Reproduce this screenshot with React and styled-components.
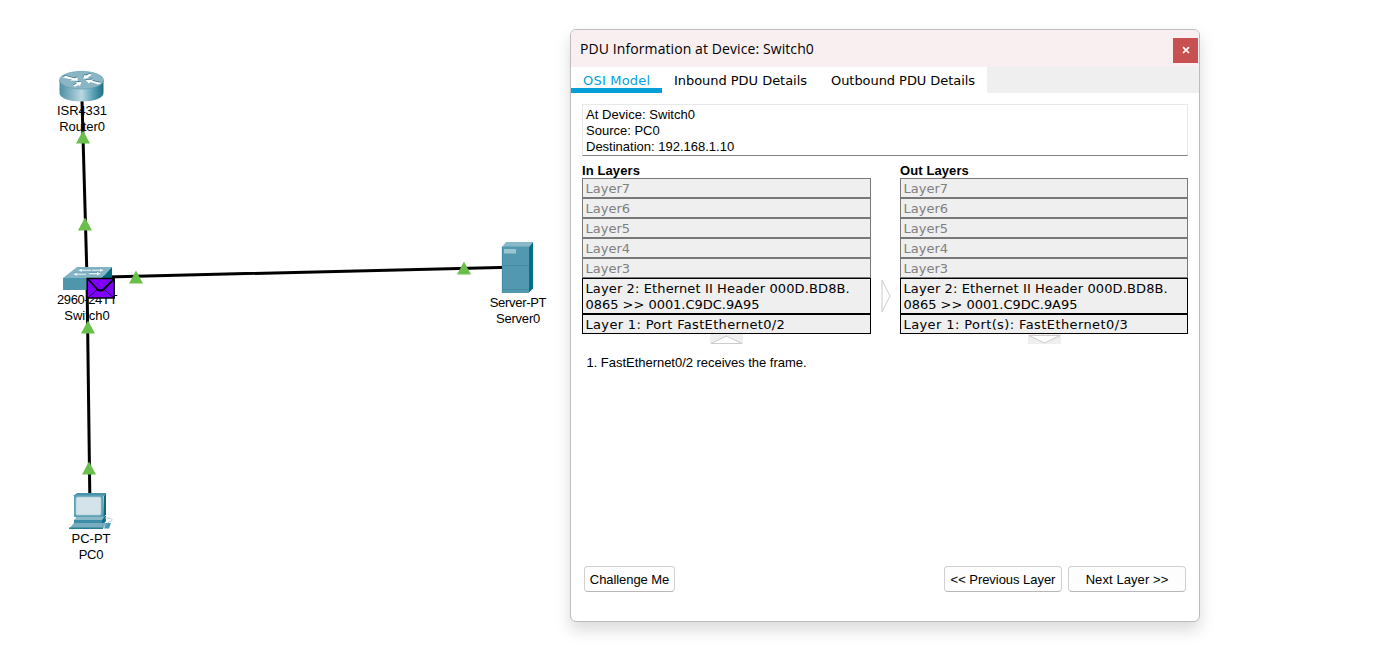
import React from "react";
import styled, { createGlobalStyle } from "styled-components";

const Global = createGlobalStyle`
  *, *::before, *::after { box-sizing: border-box; }
  body { margin: 0; background: #fff; color: #000; overflow: hidden;
    font-family: "Liberation Sans", Arial, sans-serif; font-size: 13px; line-height: 16px; }
`;

const Workspace = styled.main`
  position: relative;
  width: 1379px;
  height: 646px;
  background: #fff;
  overflow: hidden;
`;

const Links = styled.svg`
  position: absolute;
  inset: 0;
`;

const Device = styled.div`
  position: absolute;
  left: ${(p) => p.$x}px;
  top: ${(p) => p.$y}px;
  width: 80px;
  display: flex;
  flex-direction: column;
  align-items: center;
  text-align: center;
  white-space: nowrap;
  svg { overflow: visible; flex: none; }
`;

const Label = styled.span`
  letter-spacing: ${(p) => p.$ls || 0}px;
`;

const Dialog = styled.section`
  position: absolute;
  left: 570px;
  top: 29px;
  width: 630px;
  height: 593px;
  display: flex;
  flex-direction: column;
  background: #fff;
  border: 1px solid #bcbcbc;
  border-radius: 6px;
  box-shadow: 0 8px 16px rgba(0, 0, 0, 0.15);
  overflow: hidden;
  white-space: nowrap;
`;

const TitleBar = styled.header`
  display: flex;
  justify-content: space-between;
  align-items: flex-start;
  height: 37px;
  flex: none;
  padding: 8px 1px 0 9px;
  background: #f9eff0;
`;

const Title = styled.h1`
  margin: 0;
  font: 400 14px/21px "Open Sans", "Noto Sans", sans-serif;
  letter-spacing: 0.09px;
`;

const CloseButton = styled.button`
  display: flex;
  align-items: center;
  justify-content: center;
  width: 25px;
  height: 25px;
  padding: 0 0 1px 1px;
  border: 0;
  background: #c75050;
`;

const TabBar = styled.nav`
  display: flex;
  flex: none;
  height: 26px;
  background: #efefef;
`;

const Tab = styled.button`
  width: ${(p) => p.$w}px;
  height: 26px;
  padding: 6px 0 0 12px;
  border: 0;
  border-bottom: 5px solid ${(p) => (p.$active ? "#049fd9" : "#fff")};
  background: #fff;
  color: ${(p) => (p.$active ? "#049fd9" : "#000")};
  font: 13px/15px "DejaVu Sans", Verdana, sans-serif;
  letter-spacing: ${(p) => p.$ls || 0}px;
  text-align: left;
  white-space: nowrap;
`;

const Body = styled.div`
  display: flex;
  flex-direction: column;
  flex: 1;
  padding: 11px 11px 29px;
`;

const Info = styled.div`
  height: 52px;
  flex: none;
  padding: 2px 3px 0;
  border: 1px solid #e8e8e8;
  border-bottom-color: #828282;
  line-height: 16px;
`;

const Columns = styled.div`
  display: grid;
  grid-template-columns: 289px 29px 288px;
  margin-top: 6px;
`;

const Column = styled.div`
  display: flex;
  flex-direction: column;
  align-items: center;
`;

const Heading = styled.h2`
  align-self: stretch;
  margin: 0;
  height: 16px;
  padding-top: 1px;
  font-size: 13px;
  line-height: 16px;
  font-weight: 700;
  letter-spacing: 0.1px;
`;

const Layer = styled.div`
  align-self: stretch;
  padding: 2px 2.5px 0;
  border: 1px solid ${(p) => (p.$on ? "#000" : "#787878")};
  background: #efefef;
  color: ${(p) => (p.$on ? "#000" : "#808080")};
  font: 13px/16px "DejaVu Sans", Verdana, sans-serif;
`;

const Line = styled.div`
  letter-spacing: ${(p) => p.$ls || 0}px;
`;

const Between = styled.div`
  display: flex;
  justify-content: center;
  padding-top: 117px;
`;

const Message = styled.p`
  margin: 11px 0 0 4.5px;
  letter-spacing: -0.03px;
`;

const Actions = styled.footer`
  display: flex;
  gap: 6px;
  margin: auto 2px 0;
`;

const Action = styled.button`
  width: ${(p) => p.$w}px;
  height: 26px;
  margin-right: ${(p) => (p.$push ? "auto" : 0)};
  padding: 2px 0 0;
  border: 1px solid #d0d0d0;
  border-bottom-color: #b8b8b8;
  border-radius: 4px;
  background: #fdfdfd;
  color: #000;
  font: 13px/16px "Liberation Sans", Arial, sans-serif;
  letter-spacing: ${(p) => p.$ls || 0}px;
  white-space: nowrap;
`;

const routerArrows = [
  "M3.500 6.500L6.500 4.800L15 7.300L18.500 6.300L19 9.800L11 9.500L13 8.500Z",
  "M33 3.800L30.500 2.800L27.300 4.500L25.500 3.800L24 7.800L30 7.300L29 6.300Z",
  "M42.500 12L39.500 13.500L31.500 11L30 12.500L26.500 9L34.500 8.500L33 9.800Z",
  "M14 14.800L16 15.800L19.500 14L21 15L22.500 10.800L16.500 11.300L17.800 12.300Z",
];

const RouterIcon = () => (
  <svg width="46" height="32" viewBox="0 0 46 32">
    <defs>
      <linearGradient id="rside">
        <stop offset="0" stopColor="#4a8fa3" />
        <stop offset="0.3" stopColor="#8dbac8" />
        <stop offset="0.5" stopColor="#b9d8e1" />
        <stop offset="0.8" stopColor="#4f9ab0" />
        <stop offset="1" stopColor="#1b6f88" />
      </linearGradient>
    </defs>
    <path d="M.5 9v13c0 5 10 8.500 22 8.500s22-3.500 22-8.500V9z" fill="url(#rside)" />
    <ellipse cx="22.500" cy="9.200" rx="22" ry="8.900" fill="#8ab5c5" stroke="#5c9bad" strokeWidth=".6" />
    <g fill="#3a7a90" transform="translate(-.3 -.9)">
      {routerArrows.map((d) => <path key={d} d={d} />)}
    </g>
    <g fill="#fff">
      {routerArrows.map((d) => <path key={d} d={d} />)}
    </g>
  </svg>
);

const SwitchIcon = () => (
  <svg width="48" height="26" viewBox="0 0 48 26">
    <path d="M0 12L14 1h35L39 12z" fill="#83b4c5" />
    <path d="M0 12h39v12H0z" fill="#4f96ad" />
    <path d="M39 12L49 1v12L39 24z" fill="#066b82" />
    <g fill="#5a98ac" transform="translate(0 -.8)">
      <path d="M15 4l4-1.500v1h9v1.200h-9V6z" />
      <path d="M41 4l-4-1.500v1h-8v1.200h8V6z" />
      <path d="M10 8l4-1.500v1h9v1.200h-9V10z" />
      <path d="M38 7.500L34 6v1h-8v1.200h8v1.300z" />
    </g>
    <g fill="#e6f1f5">
      <path d="M15 4l4-1.500v1h9v1.200h-9V6z" />
      <path d="M41 4l-4-1.500v1h-8v1.200h8V6z" />
      <path d="M10 8l4-1.500v1h9v1.200h-9V10z" />
      <path d="M38 7.500L34 6v1h-8v1.200h8v1.300z" />
    </g>
  </svg>
);

const ServerIcon = () => (
  <svg width="32" height="53" viewBox="0 0 32 53">
    <path d="M0 5l4-5h27l-4 5z" fill="#8ab8c8" />
    <path d="M27 5l4-5v46.500l-4 4z" fill="#066f86" />
    <path d="M0 4.500h27V51H0z" fill="#5298af" />
    <path d="M2 7h12v4.500H2z" fill="#9cc5d3" />
    <path d="M0 23.500h27M0 47.500h27M.3 5v46" stroke="#3c879e" strokeWidth=".7" />
  </svg>
);

const PcIcon = () => (
  <svg width="44" height="38" viewBox="0 0 44 38">
    <path d="M8 23h29v5l-3 4H6v-4z" fill="#146f88" />
    <path d="M9 23h27l-3 4H5z" fill="#8bb9c8" />
    <path d="M5 27h28v3H5z" fill="#3d8da6" />
    <path d="M4 3L8 0h29l-2 3z" fill="#4b93aa" />
    <path d="M35 3l2-3v22l-3 2z" fill="#0b6980" />
    <path d="M5 2h29.500v22H5z" fill="#5ba0b5" />
    <rect x="7" y="4" width="25" height="18" rx="1.500" fill="#d3e3e9" stroke="#a9ccd7" strokeWidth=".7" />
    <path d="M5 30h32l-3 6H0z" fill="#77adbe" />
    <path d="M0 34.500h34V36H0z" fill="#2a7d95" />
    <path d="M37 30h5l-2 5.500h-5z" fill="#4d96ad" />
    <path d="M36 25c4 0 7 0 7 2s-3 1-4 3" fill="none" stroke="#b9cdd5" />
  </svg>
);

const arrows = [[83, 131.5], [85, 218.5], [136, 271.5], [464, 262.5], [88, 321.5], [89, 462.5]];

const Arrows = () => (
  <Links width="1379" height="646">
    {arrows.map(([x, y]) => (
      <path key={x + "-" + y} d={`M${x} ${y - 1}l7 13h-14z`} fill="#6abf4b" />
    ))}
  </Links>
);

const Envelope = () => (
  <Links width="1379" height="646">
    <rect x="87.200" y="278.500" width="27" height="19.500" fill="#7f00ff" stroke="#000" strokeWidth="1.500" />
    <path d="M88 279l9.500 10.500q3 2 6 0L114 279" fill="none" stroke="#000" strokeWidth="1.800" />
    <path d="M88 297.500l9.500-8M113.500 297.500l-9.500-8" stroke="#000" strokeWidth=".8" />
  </Links>
);

const Cables = () => (
  <Links width="1379" height="646" stroke="#000" strokeWidth="3">
    <path d="M82 101L87 278L90 510M87 277.500L517 267" fill="none" />
  </Links>
);

const dimmed = ["Layer7", "Layer6", "Layer5", "Layer4", "Layer3"];

function LayerStack({ title, port, portSpacing, children }) {
  return (
    <Column>
      <Heading>{title}</Heading>
      {dimmed.map((name) => (
        <Layer key={name}>{name}</Layer>
      ))}
      <Layer $on>
        <Line $ls={0.12}>Layer 2: Ethernet II Header 000D.BD8B.</Line>
        <Line $ls={-0.03}>0865 &gt;&gt; 0001.C9DC.9A95</Line>
      </Layer>
      <Layer $on>
        <Line $ls={portSpacing}>{port}</Line>
      </Layer>
      {children}
    </Column>
  );
}

export default function App() {
  return (
    <Workspace>
      <Global />
      <Cables />
      <Device $x={42} $y={71}>
        <RouterIcon />
        <Label $ls={-0.1}>ISR4331</Label>
        <Label $ls={-0.1}>Router0</Label>
      </Device>
      <Device $x={47} $y={266}>
        <SwitchIcon />
        <Label $ls={-0.4}>2960-24TT</Label>
        <Label>Switch0</Label>
      </Device>
      <Device $x={478} $y={242}>
        <ServerIcon />
        <Label $ls={-0.3}>Server-PT</Label>
        <Label $ls={-0.2}>Server0</Label>
      </Device>
      <Device $x={51} $y={493}>
        <PcIcon />
        <Label>PC-PT</Label>
        <Label $ls={-0.2}>PC0</Label>
      </Device>
      <Arrows />
      <Envelope />
      <Dialog>
        <TitleBar>
          <Title>PDU Information at Device: Switch0</Title>
          <CloseButton aria-label="Close">
            <svg width="8" height="8" viewBox="0 0 8 8">
              <path d="M1 1.200L7 7M7 1.200L1 7" stroke="#fff" strokeWidth="1.700" />
            </svg>
          </CloseButton>
        </TitleBar>
        <TabBar>
          <Tab $w={91} $ls={0.2} $active>OSI Model</Tab>
          <Tab $w={157} $ls={-0.04}>Inbound PDU Details</Tab>
          <Tab $w={168} $ls={-0.06}>Outbound PDU Details</Tab>
        </TabBar>
        <Body>
          <Info>
            <Line $ls={0.04}>At Device: Switch0</Line>
            <Line>Source: PC0</Line>
            <Line>Destination: 192.168.1.10</Line>
          </Info>
          <Columns>
            <LayerStack title="In Layers" port="Layer 1: Port FastEthernet0/2" portSpacing={0.33}>
              <svg width="33" height="10" viewBox="0 0 33 10">
                <path d="M0 0h33v10H0z" fill="#efefef" />
                <path d="M1 9.500L16.500 2 32 9.500z" fill="#fff" stroke="#ccc" />
              </svg>
            </LayerStack>
            <Between>
              <svg width="10" height="34" viewBox="0 0 10 34">
                <path d="M1 1v32l8-16z" fill="#fff" stroke="#ccc" />
              </svg>
            </Between>
            <LayerStack title="Out Layers" port="Layer 1: Port(s): FastEthernet0/3" portSpacing={0.4}>
              <svg width="33" height="10" viewBox="0 0 33 10">
                <path d="M0 0h33v10H0z" fill="#efefef" />
                <path d="M1 1.500L16.500 9 32 1.500z" fill="#fff" stroke="#ccc" />
              </svg>
            </LayerStack>
          </Columns>
          <Message>1. FastEthernet0/2 receives the frame.</Message>
          <Actions>
            <Action $w={91} $ls={-0.08} $push>Challenge Me</Action>
            <Action $w={118} $ls={-0.04}>&lt;&lt; Previous Layer</Action>
            <Action $w={118} $ls={0.08}>Next Layer &gt;&gt;</Action>
          </Actions>
        </Body>
      </Dialog>
    </Workspace>
  );
}
